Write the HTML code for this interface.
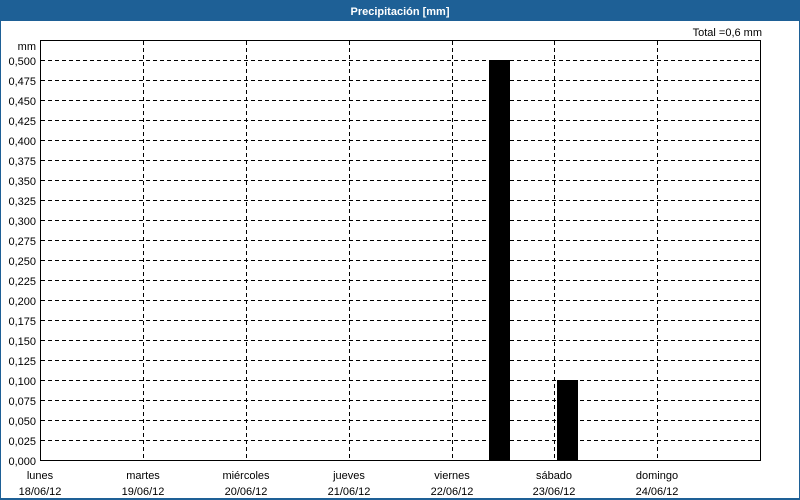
<!DOCTYPE html>
<html><head><style>
body{margin:0;width:800px;height:500px;overflow:hidden;background:#fff}
svg{display:block}
text{font-family:"Liberation Sans",sans-serif;font-size:11px;fill:#000}
</style></head><body>
<svg width="800" height="500" xmlns="http://www.w3.org/2000/svg">
<rect x="0" y="0" width="800" height="500" fill="#fff"/>
<rect x="0" y="0" width="800" height="21" fill="#1e6096"/>
<rect x="0" y="0" width="1" height="500" fill="#1e6096"/>
<rect x="799" y="0" width="1" height="500" fill="#1e6096"/>
<rect x="0" y="498" width="800" height="2" fill="#1e6096"/>
<text x="400" y="15" text-anchor="middle" style="fill:#fff;font-weight:bold">Precipitación [mm]</text>
<text x="762" y="36" text-anchor="end">Total =0,6 mm</text>
<g stroke="#000" stroke-width="1" stroke-dasharray="4,3" fill="none">
<path d="M41 60.5H760M41 80.5H760M41 100.5H760M41 120.5H760M41 140.5H760M41 160.5H760M41 180.5H760M41 200.5H760M41 220.5H760M41 240.5H760M41 260.5H760M41 280.5H760M41 300.5H760M41 320.5H760M41 340.5H760M41 360.5H760M41 380.5H760M41 400.5H760M41 420.5H760M41 440.5H760"/>
<path d="M143.5 41V460M246.5 41V460M349.5 41V460M452.5 41V460M554.5 41V460M657.5 41V460"/>
</g>
<rect x="40.5" y="40.5" width="720" height="420" fill="none" stroke="#000"/>
<rect x="489" y="60" width="21" height="401" fill="#000"/>
<rect x="557" y="380" width="21" height="81" fill="#000"/>
<g text-anchor="end">
<text x="36" y="50">mm</text>
<text x="36" y="65">0,500</text><text x="36" y="85">0,475</text><text x="36" y="105">0,450</text><text x="36" y="125">0,425</text><text x="36" y="145">0,400</text><text x="36" y="165">0,375</text><text x="36" y="185">0,350</text><text x="36" y="205">0,325</text><text x="36" y="225">0,300</text><text x="36" y="245">0,275</text><text x="36" y="265">0,250</text><text x="36" y="285">0,225</text><text x="36" y="305">0,200</text><text x="36" y="325">0,175</text><text x="36" y="345">0,150</text><text x="36" y="365">0,125</text><text x="36" y="385">0,100</text><text x="36" y="405">0,075</text><text x="36" y="425">0,050</text><text x="36" y="445">0,025</text><text x="36" y="465">0,000</text>
</g>
<g text-anchor="middle">
<text x="40" y="479">lunes</text><text x="40" y="495">18/06/12</text>
<text x="143" y="479">martes</text><text x="143" y="495">19/06/12</text>
<text x="246" y="479">miércoles</text><text x="246" y="495">20/06/12</text>
<text x="349" y="479">jueves</text><text x="349" y="495">21/06/12</text>
<text x="452" y="479">viernes</text><text x="452" y="495">22/06/12</text>
<text x="554" y="479">sábado</text><text x="554" y="495">23/06/12</text>
<text x="657" y="479">domingo</text><text x="657" y="495">24/06/12</text>
</g>
</svg>
</body></html>
